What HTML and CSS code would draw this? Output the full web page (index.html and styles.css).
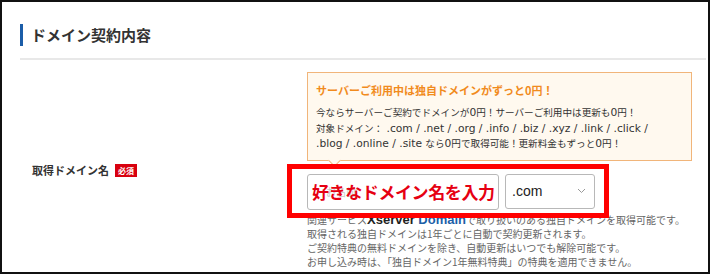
FILE: index.html
```html
<!DOCTYPE html>
<html lang="ja">
<head>
<meta charset="utf-8">
<link rel="stylesheet" href="styles.css">
</head>
<body>
<div class="frame">
  <div class="section">
    <div class="heading-wrap"><h2 class="heading">ドメイン契約内容</h2></div>
    <div class="row">
      <div class="label">取得ドメイン名<span class="badge">必須</span></div>
      <div class="field">
        <div class="promo">
          <p class="promo-title">サーバーご利用中は独自ドメインがずっと0円！</p>
          <p class="promo-text">今ならサーバーご契約でドメインが<span class="tld">0</span>円！サーバーご利用中は更新も<span class="tld">0</span>円！<br>対象ドメイン：<span class="tld"> .com / .net / .org / .info / .biz / .xyz / .link / .click /</span><br><span class="tld">.blog / .online / .site </span>なら<span class="tld">0</span>円で取得可能！更新料金もずっと<span class="tld">0</span>円！</p>
        </div>
        <div class="inputs">
          <div class="input"><span class="placeholder">お名前</span></div>
          <div class="select">.com<svg class="chev" width="9" height="6" viewBox="0 0 9 6"><path d="M1 1l3.5 3.5L8 1" fill="none" stroke="#999" stroke-width="1"/></svg></div>
        </div>
        <div class="notes">
          <p>関連サービス<b class="xs">Xserver <span class="dom">Domain</span></b>で取り扱いのある独自ドメインを取得可能です。</p>
          <p>取得される独自ドメインは1年ごとに自動で契約更新されます。</p>
          <p>ご契約特典の無料ドメインを除き、自動更新はいつでも解除可能です。</p>
          <p>お申し込み時は、「独自ドメイン1年無料特典」の特典を適用できません。</p>
        </div>
        <div class="annot"><span class="annot-text">好きなドメイン名を入力</span></div>
      </div>
    </div>
  </div>
</div>
</body>
</html>
```
FILE: styles.css
```css
* { box-sizing: border-box; }
html, body { margin: 0; padding: 0; background: #fff; }
body { font-family: "Noto Sans CJK JP", "Noto Sans", sans-serif; color: #333; }
.frame {
  width: 710px;
  height: 274px;
  border: 2px solid #111;
  padding: 22px 2px 0 18px;
  overflow: hidden;
  background: #fff;
}
.heading-wrap {
  padding-bottom: 12px;
  border-bottom: 2px solid #e8e8e8;
}
.heading {
  margin: 0;
  height: 22px;
  line-height: 22px;
  font-size: 15px;
  font-weight: 700;
  color: #333;
  border-left: 3px solid #1b5da8;
  padding-left: 8px;
}
.row {
  display: flex;
  align-items: center;
  margin-top: 12px;
}
.label {
  width: 287px;
  padding-left: 12px;
  font-size: 11px;
  font-weight: 700;
  color: #333;
  display: flex;
  align-items: center;
}
.badge {
  display: inline-block;
  margin-left: 6px;
  width: 22px;
  height: 13px;
  line-height: 13px;
  text-align: center;
  background: #d8000f;
  color: #fff;
  font-size: 8px;
  font-weight: 700;
}
.field {
  position: relative;
  width: 385px;
}
.promo {
  position: relative;
  border: 1px solid #f1b57a;
  background: #fff9ef;
  padding: 8px 8px 8px;
}
.promo::after {
  content: "";
  position: absolute;
  left: 22px;
  bottom: -5px;
  width: 8px;
  height: 8px;
  background: #fff9ef;
  border-right: 1px solid #f1b57a;
  border-bottom: 1px solid #f1b57a;
  transform: rotate(45deg);
}
.promo-title {
  margin: 0;
  font-size: 11px;
  line-height: 18px;
  font-weight: 700;
  color: #f18b1d;
}
.promo-text {
  margin: 6px 0 0;
  font-size: 9.6px;
  line-height: 15.5px;
  color: #333;
  white-space: nowrap;
}
.tld {
  font-family: "DejaVu Sans", sans-serif;
  font-size: 10.7px;
}
.inputs {
  display: flex;
  gap: 6px;
  margin-top: 13px;
}
.input {
  width: 192px;
  height: 36px;
  border: 1px solid #b8b8b8;
  border-radius: 3px;
  background: #fff;
  display: flex;
  align-items: center;
  padding-left: 18px;
}
.placeholder { font-size: 10px; color: #c8c8c8; }
.select {
  width: 90px;
  height: 35px;
  border: 1px solid #b8b8b8;
  border-radius: 3px;
  background: #fff;
  display: flex;
  align-items: center;
  justify-content: space-between;
  padding: 0 8px 0 6px;
  font-family: "Liberation Sans", sans-serif;
  font-size: 14px;
  color: #222;
}
.notes {
  margin-top: 3px;
  font-size: 10px;
  line-height: 14px;
  color: #666;
  white-space: nowrap;
}
.notes p { margin: 0; }
.xs { color: #222; font-family: "Liberation Sans", sans-serif; font-size: 13px; line-height: 14px; }
.dom { color: #1d5fa8; }
.annot {
  position: absolute;
  left: -20px;
  top: 92px;
  width: 322px;
  height: 54px;
  border: 5px solid #f00;
  display: flex;
  align-items: center;
  padding-left: 20px;
}
.annot-text {
  font-size: 17px;
  font-weight: 700;
  color: #e60012;
  letter-spacing: -0.4px;
}
```
